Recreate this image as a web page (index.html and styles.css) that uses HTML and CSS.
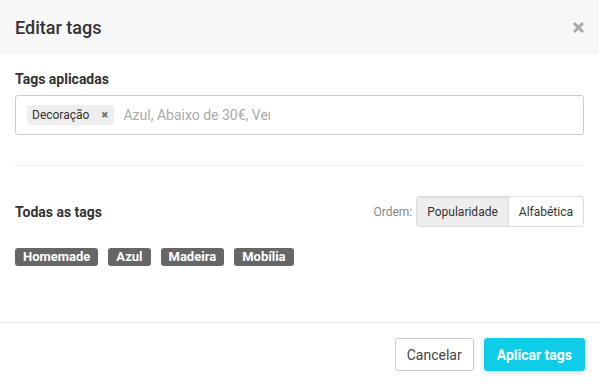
FILE: index.html
```html
<!DOCTYPE html>
<html lang="pt">
  <head>
    <meta charset="utf-8">
    <title>Editar tags</title>
    <link rel="stylesheet" href="styles.css">
  </head>
  <body>
    <div class="modal">
      <div class="modal-header">
        <h1 class="modal-title">Editar tags</h1>
        <button class="close" aria-label="Fechar">
          <svg width="13" height="13" viewBox="0 0 13 13"><path d="M2 2L11 11M11 2L2 11" stroke="#aaa" stroke-width="3"/></svg>
        </button>
      </div>

      <div class="modal-body">
        <label class="field-label">Tags aplicadas</label>
        <div class="tag-input">
          <span class="chip">Decoração <span class="chip-x">&#x2716;</span></span>
          <span class="placeholder">Azul, Abaixo de 30€, Verão</span>
        </div>

        <hr class="divider">

        <div class="all-head">
          <span class="field-label">Todas as tags</span>
          <div class="order">
            <span class="order-label">Ordem:</span>
            <div class="seg">
              <button class="seg-btn active">Popularidade</button>
              <button class="seg-btn">Alfabética</button>
            </div>
          </div>
        </div>

        <div class="tag-list">
          <span class="tag">Homemade</span>
          <span class="tag">Azul</span>
          <span class="tag">Madeira</span>
          <span class="tag">Mobília</span>
        </div>
      </div>

      <div class="modal-footer">
        <button class="btn">Cancelar</button>
        <button class="btn btn-primary">Aplicar tags</button>
      </div>
    </div>
  </body>
</html>
```

FILE: styles.css
```css
html, body {
  margin: 0;
  padding: 0;
  height: 100%;
}
body {
  font-family: Roboto, "Liberation Sans", sans-serif;
  font-size: 13px;
  color: #333;
  background: #fff;
}

.modal {
  display: flex;
  flex-direction: column;
  height: 100%;
}

.modal-header {
  height: 54px;
  padding: 0 15px;
  background: #f7f7f7;
  display: flex;
  align-items: center;
  justify-content: space-between;
}
.modal-title {
  margin: 0;
  font-size: 18px;
  font-weight: 500;
  color: #333;
}
.close {
  border: 0;
  background: none;
  padding: 0;
  display: flex;
  margin-right: -1px;
}

.modal-body {
  padding: 16px 15px 0;
  flex: 1;
}

.field-label {
  display: block;
  font-size: 14px;
  font-weight: 700;
  line-height: 18px;
  color: #333;
}

.tag-input {
  margin-top: 7px;
  height: 40px;
  box-sizing: border-box;
  border: 1px solid #ccc;
  border-radius: 3px;
  padding: 0 11px;
  display: flex;
  align-items: center;
  gap: 9px;
}
.chip {
  background: #eee;
  border-radius: 3px;
  height: 20px;
  line-height: 20px;
  padding: 0 5px;
  font-size: 12px;
  color: #333;
  display: inline-flex;
  align-items: center;
}
.chip-x {
  font-size: 9px;
  color: #777;
  margin-left: 12px;
}
.placeholder {
  color: #aaa;
  font-size: 14px;
  width: 147px;
  overflow: hidden;
  white-space: nowrap;
}

.divider {
  border: 0;
  border-top: 1px solid #eee;
  margin: 30px 0 0;
}

.all-head {
  margin-top: 30px;
  display: flex;
  align-items: center;
  justify-content: space-between;
}
.order {
  display: flex;
  align-items: center;
  gap: 4px;
}
.order-label {
  color: #888;
  font-size: 12px;
}
.seg {
  display: flex;
  border: 1px solid #ddd;
  border-radius: 3px;
  overflow: hidden;
}
.seg-btn {
  font-family: inherit;
  font-size: 12px;
  color: #333;
  background: #fff;
  border: 0;
  height: 29px;
  padding: 0 10px;
}
.seg-btn.active {
  background: #eee;
  box-shadow: inset 0 1px 2px rgba(0,0,0,0.08);
  border-right: 1px solid #ddd;
}

.tag-list {
  margin-top: 21px;
  display: flex;
  gap: 10px;
}
.tag {
  background: #666;
  color: #fff;
  font-weight: 700;
  font-size: 13px;
  height: 18px;
  line-height: 18px;
  padding: 0 8px;
  border-radius: 3px;
}

.modal-footer {
  border-top: 1px solid #e5e5e5;
  padding: 15px 14px 16px 15px;
  display: flex;
  justify-content: flex-end;
  gap: 10px;
}
.btn {
  font-family: inherit;
  font-size: 14px;
  height: 33px;
  padding: 0 11px;
  border: 1px solid #ccc;
  border-radius: 3px;
  background: #fff;
  color: #444;
}
.btn-primary {
  border-color: #0fcde9;
  background: #0fcde9;
  color: #fff;
  font-weight: 700;
  padding: 0 12px;
  box-shadow: 0 2px 5px rgba(0,0,0,0.15);
}
```
